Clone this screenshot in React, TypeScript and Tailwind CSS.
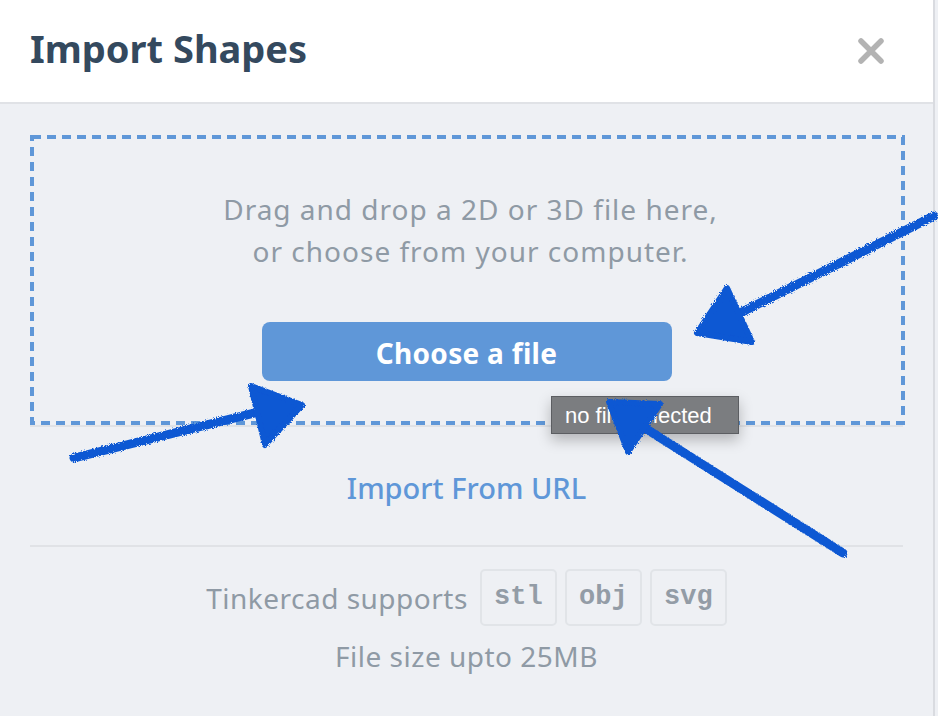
import React from "react";

const ScribbleArrows = () => (
  <svg
    className="pointer-events-none absolute inset-0"
    width={938}
    height={716}
    viewBox="0 0 938 716"
  >
    <defs>
      <filter id="rough" x="-5%" y="-5%" width="110%" height="110%">
        <feTurbulence type="fractalNoise" baseFrequency="0.9" numOctaves={2} result="noise" />
        <feDisplacementMap in="SourceGraphic" in2="noise" scale={4} />
      </filter>
    </defs>
    <g
      fill="#0c58d3"
      stroke="#0c58d3"
      strokeLinecap="round"
      strokeLinejoin="round"
      filter="url(#rough)"
    >
      {/* top right arrow */}
      <path d="M934 216 L742 312" strokeWidth={9} fill="none" />
      <path d="M727 288 L697 333 L752 342 Z" strokeWidth={6} />
      {/* bottom left arrow */}
      <path d="M74 458 L258 412" strokeWidth={9} fill="none" />
      <path d="M251 386 L302 405 L265 445 Z" strokeWidth={6} />
      {/* bottom right arrow */}
      <path d="M843 553 L640 425" strokeWidth={9} fill="none" />
      <path d="M609 402 L660 404 L628 452 Z" strokeWidth={6} />
    </g>
  </svg>
);

const FormatBadge = ({ label }: { label: string }) => (
  <span className="flex h-[57px] w-[77px] items-center justify-center rounded-[5px] border-2 border-[#e1e4e8] font-['Liberation_Mono',monospace] text-[27px] font-bold text-[#939ca6]">
    {label}
  </span>
);

export default function App() {
  return (
    <div className="relative h-[716px] w-[938px] overflow-hidden bg-[#eef0f4] font-['Noto_Sans',sans-serif]">
      <div className="flex h-full w-[935px] flex-col border-r-2 border-[#d9dbe0]">
        {/* header */}
        <div className="flex h-[104px] shrink-0 items-center justify-between border-b-2 border-[#e0e2e6] bg-white pb-[6px] pl-[30px] pr-[48px]">
          <h1 className="text-[38px] font-bold text-[#34495e]">Import Shapes</h1>
          <svg width={28} height={26} viewBox="0 0 28 26" className="mt-[6px]">
            <path d="M4 3 L24 23 M24 3 L4 23" stroke="#b3b3b3" strokeWidth={5.5} strokeLinecap="round" />
          </svg>
        </div>

        {/* body */}
        <div className="flex flex-col px-[30px] pt-[31px]">
          <div className="relative flex h-[290px] flex-col items-center pt-[53px]">
            <svg className="pointer-events-none absolute inset-0" width="875" height="290">
              <rect
                x={2}
                y={2}
                width="871"
                height="286"
                fill="none"
                stroke="#5f97d8"
                strokeWidth={4}
                strokeDasharray="9 6"
              />
            </svg>
            <p className="pl-[8px] text-center text-[28px] leading-[42px] tracking-[1px] text-[#8f9aa5]">
              Drag and drop a 2D or 3D file here,
              <br />
              or choose from your computer.
            </p>
            <button className="mt-[50px] h-[59px] w-[410px] rounded-[8px] bg-[#5f97d8] pt-[2px] text-[28px] font-bold tracking-[0.3px] text-white">
              Choose a file
            </button>
          </div>
          <div className="h-[2px] bg-[#e0e2e6]" />

          <div className="flex h-[118px] items-center justify-center pt-[4px]">
            <span className="text-[29px] font-medium text-[#5f97d8]">Import From URL</span>
          </div>

          <div className="h-[2px] bg-[#e0e2e6]" />

          <div className="mt-[22px] flex items-center justify-center gap-[8px]">
            <span className="mr-[4px] text-[28px] tracking-[0.5px] text-[#8f9aa5]">Tinkercad supports</span>
            <FormatBadge label="stl" />
            <FormatBadge label="obj" />
            <FormatBadge label="svg" />
          </div>
          <p className="mt-[9px] text-center text-[28px] tracking-[0.5px] text-[#8f9aa5]">File size upto 25MB</p>
        </div>
      </div>

      {/* native file input tooltip */}
      <div className="absolute left-[551px] top-[396px] flex h-[38px] w-[188px] items-center border border-[#5c5e62] bg-[#7b7d80] pl-[13px] font-['Liberation_Sans',sans-serif] text-[22px] text-white shadow-[0_6px_14px_rgba(0,0,0,0.25)]">
        no file selected
      </div>

      <ScribbleArrows />
    </div>
  );
}
